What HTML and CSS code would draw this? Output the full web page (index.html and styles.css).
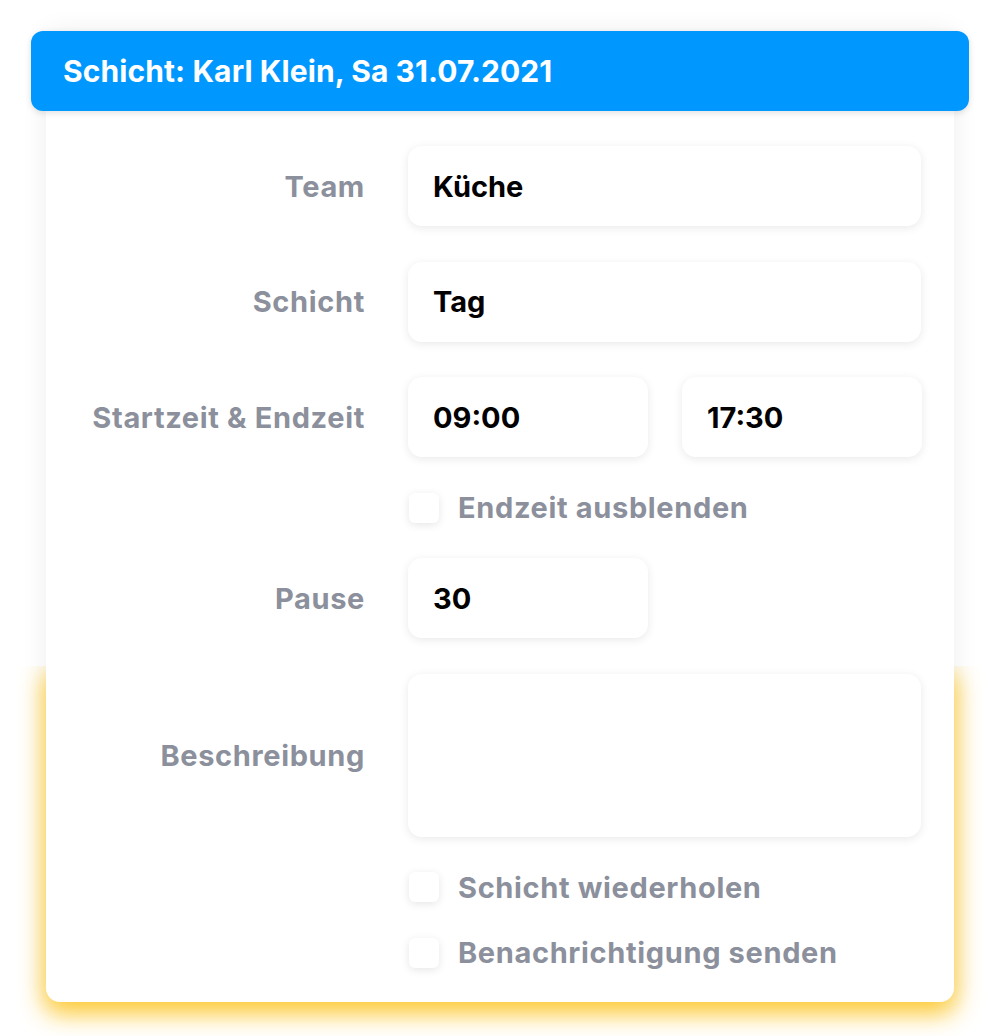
FILE: index.html
```html
<!DOCTYPE html>
<html lang="de">
<head>
<meta charset="utf-8">
<link rel="stylesheet" href="styles.css">
</head>
<body>
<div class="page">
  <div class="card">
    <div class="header">Schicht: Karl Klein, Sa 31.07.2021</div>
    <div class="form">
      <div class="label">Team</div>
      <div class="field"><div class="input">Küche</div></div>

      <div class="label">Schicht</div>
      <div class="field"><div class="input">Tag</div></div>

      <div class="label">Startzeit &amp; Endzeit</div>
      <div class="field pair"><div class="input half">09:00</div><div class="input half">17:30</div></div>

      <div class="label empty"></div>
      <div class="check"><span class="box"></span><span class="check-text">Endzeit ausblenden</span></div>

      <div class="label">Pause</div>
      <div class="field"><div class="input half">30</div></div>

      <div class="label">Beschreibung</div>
      <div class="field"><div class="input area"></div></div>

      <div class="label empty"></div>
      <div class="check"><span class="box"></span><span class="check-text">Schicht wiederholen</span></div>

      <div class="label empty"></div>
      <div class="check"><span class="box"></span><span class="check-text">Benachrichtigung senden</span></div>
    </div>
  </div>
</div>
</body>
</html>
```
FILE: styles.css
```css
html, body {
  margin: 0;
  padding: 0;
  background: #ffffff;
}
body {
  font-family: "Inter", "Liberation Sans", sans-serif;
}
.page {
  padding: 31px 46px 34px 46px;
}
.card {
  position: relative;
  z-index: 0;
  background: #ffffff;
  border-radius: 0 0 14px 14px;
  box-shadow: 0 0 26px rgba(0, 0, 0, 0.07);
}
.card::before {
  content: "";
  position: absolute;
  left: 0;
  right: 0;
  top: 635px;
  bottom: 0;
  z-index: -1;
  background: #ffffff;
  border-radius: 0 0 14px 14px;
  box-shadow: 0 10px 24px 2px rgba(255, 200, 40, 0.95);
  clip-path: inset(0 -60px -60px -60px);
}
.header {
  margin: 0 -15px;
  height: 80px;
  border-radius: 12px;
  background: #0098ff;
  box-shadow: 0 2px 6px rgba(0, 0, 0, 0.12);
  color: #ffffff;
  font-weight: 700;
  font-size: 30px;
  letter-spacing: 0.1px;
  display: flex;
  align-items: center;
  padding-left: 32px;
}
.form {
  display: grid;
  grid-template-columns: 319px 513px;
  column-gap: 43px;
  row-gap: 35.5px;
  padding: 35px 33px 34px 0;
}
.label {
  display: flex;
  align-items: center;
  justify-content: flex-end;
  color: #8b909c;
  font-weight: 700;
  font-size: 29px;
  letter-spacing: 0.65px;
  white-space: nowrap;
}
.field {
  display: flex;
}
.pair {
  gap: 34px;
}
.input {
  flex: 1;
  height: 80px;
  box-sizing: border-box;
  border-radius: 14px;
  background: #ffffff;
  box-shadow: 0 2px 10px rgba(0, 0, 0, 0.09);
  display: flex;
  align-items: center;
  padding-left: 25px;
  font-weight: 700;
  font-size: 29px;
  color: #000000;
}
.input.half {
  flex: 0 0 240px;
}
.input.area {
  height: 163px;
}
.check {
  display: flex;
  align-items: center;
  height: 30px;
}
.box {
  flex: 0 0 auto;
  width: 30px;
  height: 30px;
  border-radius: 6px;
  background: #ffffff;
  box-shadow: 0 2px 8px rgba(0, 0, 0, 0.1);
  margin-left: 1px;
  margin-right: 19px;
}
.check-text {
  color: #8b909c;
  font-weight: 700;
  font-size: 29px;
  letter-spacing: 0.65px;
  white-space: nowrap;
}
```
